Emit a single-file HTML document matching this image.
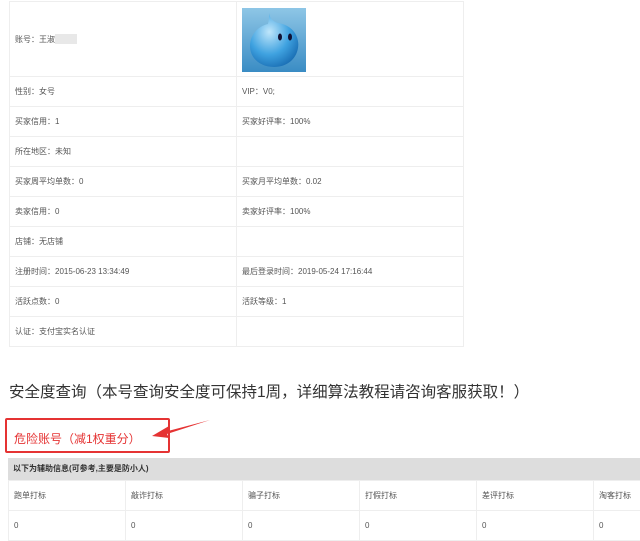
<!DOCTYPE html><html><head><meta charset="utf-8"><style>
body{margin:0;width:640px;height:541px;background:#fff;font-family:"Liberation Sans","Noto Sans CJK SC",sans-serif;color:#555;overflow:hidden;position:relative}
.t{position:absolute;left:9px;top:1px;border-collapse:collapse;font-size:8px}
.t td{border:1px solid #eee;height:29px;padding:0 0 0 5px;width:221px}
.t tr:first-child td{height:74px}
.title{position:absolute;left:9px;top:380px;font-size:15.5px;color:#333;white-space:nowrap}
.box{position:absolute;left:5px;top:418px;width:165px;height:35px;border:2px solid #e53333;border-radius:2px;box-sizing:border-box}
.red{position:absolute;left:14px;top:430px;font-size:12px;color:#e53333}
.bar{position:absolute;left:8px;top:458px;width:632px;height:22px;background:#ddd;font-size:8px;color:#333;line-height:22px;text-indent:5px;font-weight:bold}
.t2{position:absolute;left:8px;top:480px;border-collapse:collapse;font-size:8px;table-layout:fixed;width:696px}
.t2 td{border:1px solid #eee;height:29px;width:111px;padding:0 0 0 5px}
</style></head><body>
<table class="t">
<tr><td>账号：王淑<span style="display:inline-block;width:22px;height:10px;background:#e8e8e8;vertical-align:middle"></span></td><td><svg width="64" height="64" viewBox="0 0 64 64" style="display:block;margin-top:2px"><defs><linearGradient id="b" x1="0" y1="0" x2="0" y2="1"><stop offset="0" stop-color="#8ec6e6"/><stop offset="1" stop-color="#3a8cc4"/></linearGradient><radialGradient id="d" cx=".4" cy=".35" r=".7"><stop offset="0" stop-color="#bfe6fb"/><stop offset=".6" stop-color="#3fa2e0"/><stop offset="1" stop-color="#1a6fb5"/></radialGradient></defs><rect width="64" height="64" fill="url(#b)"/><path d="M27 5 C28 12 33 14 36 15 C50 17 58 28 56 40 C54 52 44 59 32 59 C18 59 8 50 8 38 C8 26 17 18 26 16 C27 12 27 9 27 5Z" fill="url(#d)"/><ellipse cx="38" cy="29" rx="2" ry="3.5" fill="#113"/><ellipse cx="48" cy="29" rx="2" ry="3.5" fill="#113"/></svg></td></tr>
<tr><td>性别：女号</td><td>VIP：V0;</td></tr>
<tr><td>买家信用：1</td><td>买家好评率：100%</td></tr>
<tr><td>所在地区：未知</td><td></td></tr>
<tr><td>买家周平均单数：0</td><td>买家月平均单数：0.02</td></tr>
<tr><td>卖家信用：0</td><td>卖家好评率：100%</td></tr>
<tr><td>店铺：无店铺</td><td></td></tr>
<tr><td>注册时间：2015-06-23 13:34:49</td><td>最后登录时间：2019-05-24 17:16:44</td></tr>
<tr><td>活跃点数：0</td><td>活跃等级：1</td></tr>
<tr><td>认证：支付宝实名认证</td><td></td></tr>
</table>
<div class="title">安全度查询（本号查询安全度可保持1周，详细算法教程请咨询客服获取！）</div>
<div class="box"></div><div class="red">危险账号（减1权重分）</div>
<svg style="position:absolute;left:150px;top:418px" width="62" height="22"><path d="M60 2 L18 13 L19 8 L2 18 L19 20 L17 16 Z" fill="#e53333"/></svg>
<div class="bar">以下为辅助信息(可参考,主要是防小人)</div>
<table class="t2">
<tr><td>跑单打标</td><td>敲诈打标</td><td>骗子打标</td><td>打假打标</td><td>差评打标</td><td>淘客打标</td></tr>
<tr><td>0</td><td>0</td><td>0</td><td>0</td><td>0</td><td>0</td></tr>
</table>
</body></html>
